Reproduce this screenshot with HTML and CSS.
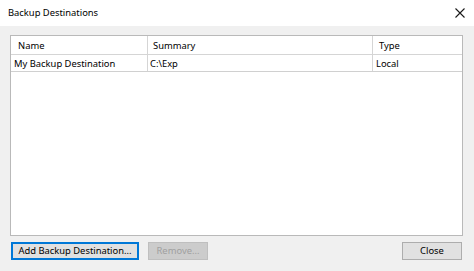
FILE: index.html
```html
<!DOCTYPE html>
<html>
<head>
<meta charset="utf-8">
<link rel="stylesheet" href="styles.css">
</head>
<body>
<div class="window">
  <div class="titlebar">
    <span class="title">Backup Destinations</span>
    <svg class="close-x" width="10" height="10" viewBox="0 0 10 10"><path d="M0.5 0.5 L9.5 9.5 M9.5 0.5 L0.5 9.5" stroke="#1a1a1a" stroke-width="1.1" fill="none"/></svg>
  </div>
  <div class="content">
    <div class="list">
      <div class="row header">
        <div class="cell c1">Name</div>
        <div class="cell c2">Summary</div>
        <div class="cell c3">Type</div>
      </div>
      <div class="row data">
        <div class="cell c1">My Backup Destination</div>
        <div class="cell c2">C:\Exp</div>
        <div class="cell c3">Local</div>
      </div>
    </div>
    <div class="buttons">
      <button class="btn add">Add Backup Destination...</button>
      <button class="btn remove" disabled>Remove...</button>
      <span class="spacer"></span>
      <button class="btn close">Close</button>
    </div>
  </div>
</div>
</body>
</html>
```
FILE: styles.css
```css
html, body {
  margin: 0;
  padding: 0;
  background: #f0f0f0;
}
.window {
  width: 474px;
  height: 271px;
  background: #f0f0f0;
  font-family: "Noto Sans", "DejaVu Sans", sans-serif;
  font-size: 9.4px;
  color: #000;
  display: flex;
  flex-direction: column;
  box-sizing: border-box;
}
.titlebar {
  height: 26px;
  background: #ffffff;
  display: flex;
  align-items: center;
  padding-left: 8px;
  padding-right: 9px;
  box-sizing: border-box;
}
.title {
  flex: 1;
  margin-top: -1px;
}
.close-x {
  margin-top: -1px;
}
.content {
  flex: 1;
  display: flex;
  flex-direction: column;
  padding: 9px 10px 0 10px;
}
.list {
  height: 201px;
  width: 453px;
  background: #ffffff;
  border: 1px solid #b9b9b9;
  box-sizing: border-box;
  display: flex;
  flex-direction: column;
}
.row {
  display: flex;
}
.header {
  height: 19px;
  border-bottom: 1px solid #d5d5d5;
  box-sizing: border-box;
}
.data {
  height: 17px;
  border-bottom: 1px solid #d0d0d0;
  box-sizing: border-box;
}
.cell {
  display: flex;
  align-items: center;
  white-space: nowrap;
  box-sizing: border-box;
  border-right: 1px solid #d5d5d5;
}
.c1 { width: 137px; }
.c2 { width: 225px; }
.c3 { flex: 1; border-right: none; }
.header .c1 { padding-left: 7px; }
.header .c2 { padding-left: 5px; }
.header .c3 { padding-left: 6px; }
.data .c1 { padding-left: 3px; }
.data .c2 { padding-left: 2px; }
.data .c3 { padding-left: 3px; }
.buttons {
  display: flex;
  margin-top: 6px;
  padding-left: 1px;
  padding-right: 2px;
}
.btn {
  height: 18px;
  font-family: "Noto Sans", "DejaVu Sans", sans-serif;
  font-size: 9.4px;
  white-space: nowrap;
  padding: 0;
  margin: 0;
  background: #e1e1e1;
  border: 1px solid #adadad;
  color: #000;
  box-sizing: border-box;
  line-height: 14px;
}
.add {
  width: 128px;
  border: 2px solid #0078d7;
}
.remove {
  width: 60px;
  margin-left: 9px;
  background: #cccccc;
  border-color: #bfbfbf;
  color: #a0a0a0;
}
.spacer { flex: 1; }
.close {
  width: 60px;
}
```
